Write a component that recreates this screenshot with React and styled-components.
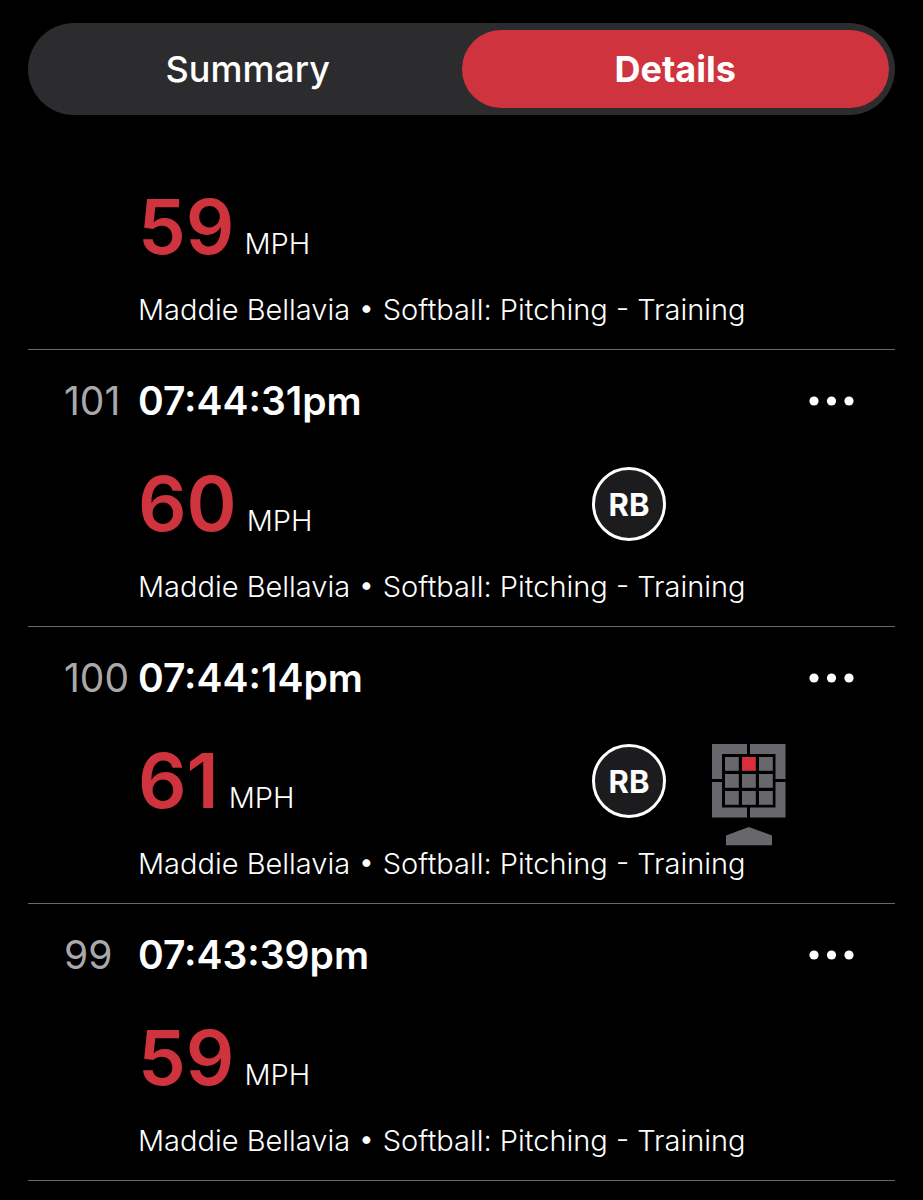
import { useState } from "react";
import { styled, createGlobalStyle } from "styled-components";

const GlobalStyle = createGlobalStyle`
  * {
    box-sizing: border-box;
  }

  body {
    margin: 0;
    background-color: #000;
    color: #fff;
    font-family: Inter, "Open Sans", sans-serif;
  }

  button {
    border: none;
    background: none;
    padding: 0;
    color: inherit;
    font: inherit;
    cursor: pointer;
  }
`;

const Page = styled.main`
  padding: 23px 28px 0;
`;

const Tabs = styled.div`
  display: flex;
  padding: 7px 6px;
  margin-bottom: 75px;
  border-radius: 46px;
  background-color: #2c2c2e;
`;

const Tab = styled.button`
  && {
    flex: 1;
    height: 78px;
    border-radius: 39px;
    font-size: 36px;
    font-weight: ${(props) => (props.$active ? 700 : 500)};
    background-color: ${(props) => (props.$active ? "#cf343e" : "transparent")};
  }
`;

const List = styled.ul`
  list-style: none;
  margin: 0;
  padding: 0;
`;

const Item = styled.li`
  padding: 0 41px 21px 36px;
  border-bottom: 1px solid #6a6a6c;
`;

const ItemHeader = styled.div`
  display: flex;
  align-items: center;
  padding: 31px 0 46px;
  line-height: 40px;
`;

const Index = styled.span`
  flex: 0 0 74px;
  font-size: 39px;
  font-weight: 400;
  color: #a9a9ab;
  white-space: nowrap;
`;

const Time = styled.span`
  flex: 1;
  font-size: 39px;
  font-weight: 600;
`;

const MoreBtn = styled.button`
  display: flex;
  align-items: center;
  height: 40px;
`;

const Reading = styled.div`
  display: flex;
  align-items: flex-start;
  gap: 46px;
  height: 74px;
  padding: 0 68px 0 74px;
`;

const Speed = styled.div`
  flex: 1;
  display: flex;
  align-items: baseline;
  gap: 10px;
  line-height: 72px;
`;

const SpeedValue = styled.span`
  font-size: 76px;
  font-weight: 600;
  color: #cf343e;
`;

const SpeedUnit = styled.span`
  font-size: 29px;
  font-weight: 300;
`;

const PitchType = styled.span`
  display: flex;
  align-items: center;
  justify-content: center;
  width: 74px;
  height: 74px;
  border: 3px solid #fff;
  border-radius: 50%;
  background-color: #1c1c1e;
  font-size: 31px;
  font-weight: 700;
`;

const ZoneSlot = styled.div`
  width: 74px;

  svg {
    display: block;
  }
`;

const Description = styled.p`
  margin: 28px 0 0;
  padding-left: 74px;
  font-size: 29px;
  font-weight: 300;
  line-height: 36px;
  white-space: nowrap;
`;

const pitches = [
  { id: 102, speed: 59 },
  { id: 101, time: "07:44:31pm", speed: 60, type: "RB" },
  { id: 100, time: "07:44:14pm", speed: 61, type: "RB", zone: 1 },
  { id: 99, time: "07:43:39pm", speed: 59 },
];

const cellOffsets = [13, 30, 47];

function StrikeZone({ active }) {
  return (
    <svg width="74" height="102" viewBox="0 0 74 102" aria-hidden="true">
      <g fill="#68686c">
        <path d="M0 0H35V10H10V35H0Z" />
        <path d="M38 0H73.5V35H63.5V10H38Z" />
        <path d="M0 38H10V63.5H35V73.5H0Z" />
        <path d="M63.5 38H73.5V73.5H38V63.5H63.5Z" />
        <path d="M14 91.5L36.7 83L60 91.5V101.3H14Z" />
      </g>
      {cellOffsets.map((y, row) =>
        cellOffsets.map((x, col) => (
          <rect
            key={`cell_${row}_${col}`}
            x={x}
            y={y}
            width="13.8"
            height="13.8"
            fill={row * 3 + col === active ? "#d8303b" : "#68686c"}
          />
        ))
      )}
    </svg>
  );
}

function PitchItem({ pitch }) {
  return (
    <Item>
      {pitch.time ? (
        <ItemHeader>
          <Index>{pitch.id}</Index>
          <Time>{pitch.time}</Time>
          <MoreBtn aria-label="More options">
            <svg width="45" height="10" viewBox="0 0 45 10" fill="#fff">
              <circle cx="5" cy="5" r="4.6" />
              <circle cx="22.5" cy="5" r="4.6" />
              <circle cx="40" cy="5" r="4.6" />
            </svg>
          </MoreBtn>
        </ItemHeader>
      ) : null}
      <Reading>
        <Speed>
          <SpeedValue>{pitch.speed}</SpeedValue>
          <SpeedUnit>MPH</SpeedUnit>
        </Speed>
        {pitch.type ? <PitchType>{pitch.type}</PitchType> : null}
        <ZoneSlot>
          {pitch.zone !== undefined ? <StrikeZone active={pitch.zone} /> : null}
        </ZoneSlot>
      </Reading>
      <Description>Maddie Bellavia • Softball: Pitching - Training</Description>
    </Item>
  );
}

function App() {
  const [tab, setTab] = useState("Details");

  return (
    <>
      <GlobalStyle />
      <Page>
        <Tabs>
          {["Summary", "Details"].map((name) => (
            <Tab
              key={name}
              $active={tab === name}
              aria-pressed={tab === name}
              onClick={() => setTab(name)}
            >
              {name}
            </Tab>
          ))}
        </Tabs>
        <List>
          {pitches.map((pitch) => (
            <PitchItem key={`pitch_${pitch.id}`} pitch={pitch} />
          ))}
        </List>
      </Page>
    </>
  );
}

export default App;
